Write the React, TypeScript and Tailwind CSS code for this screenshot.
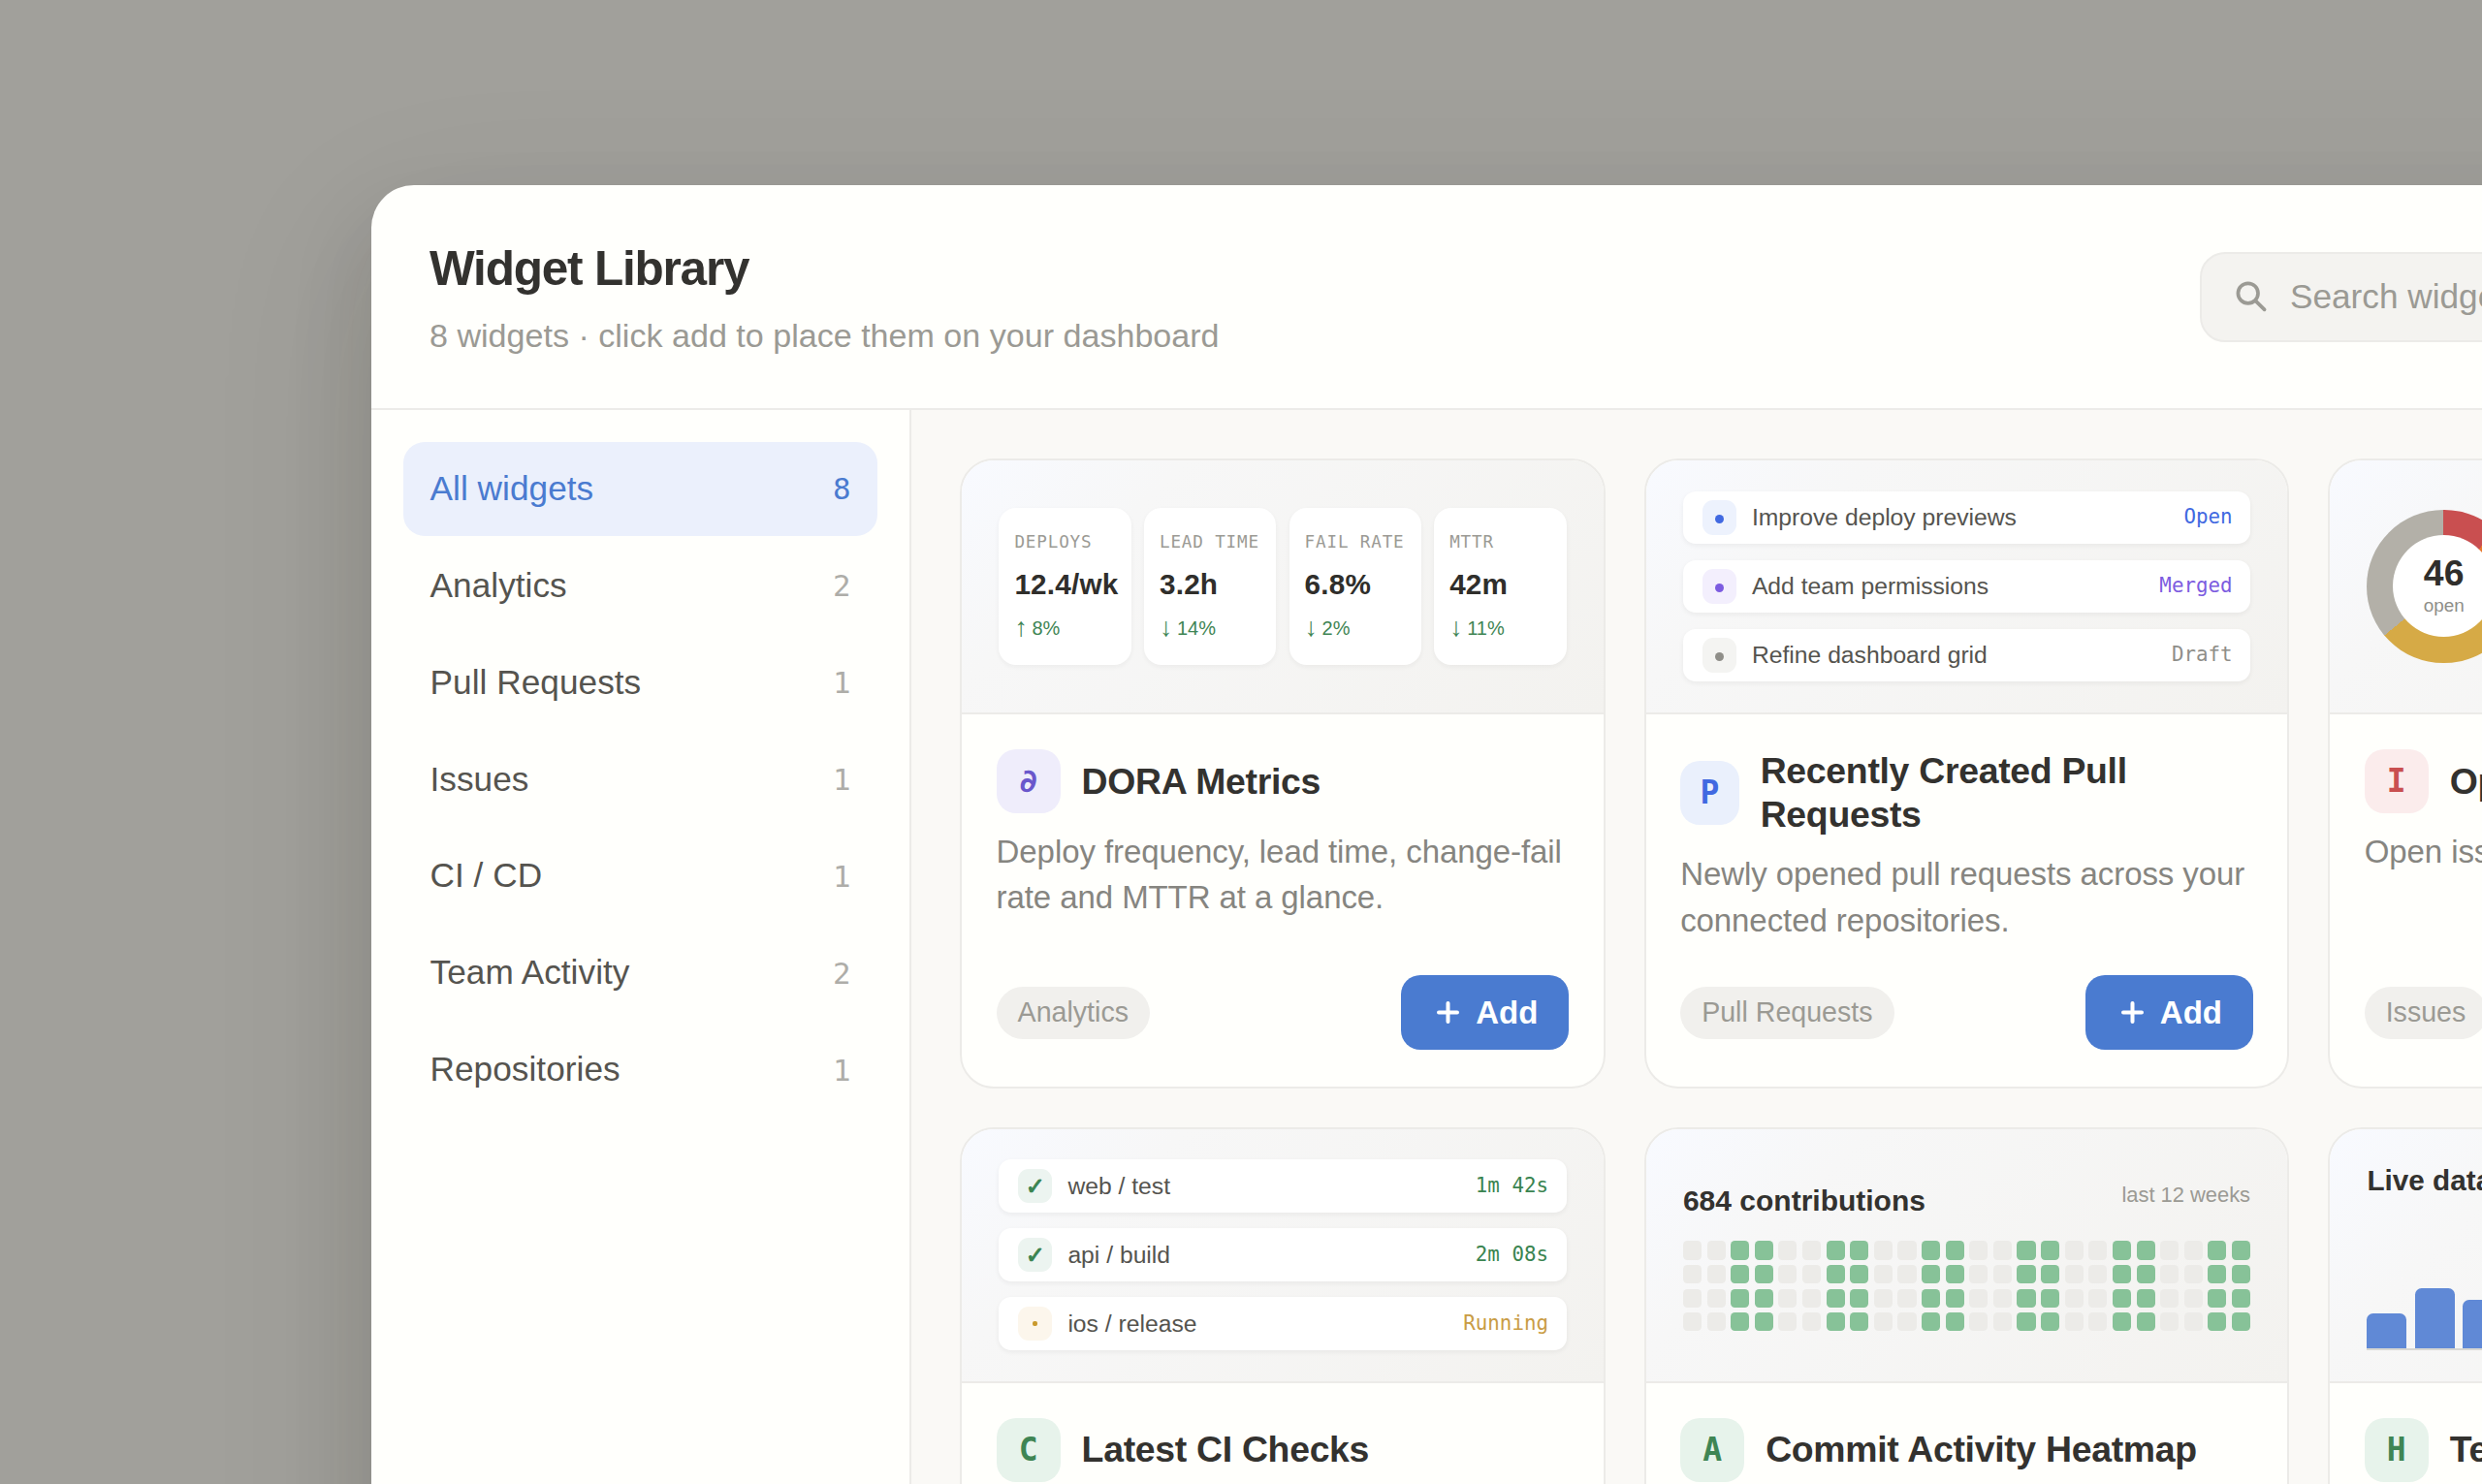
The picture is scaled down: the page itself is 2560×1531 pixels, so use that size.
import type { ReactNode } from 'react';

const categories = [
  { label: 'All widgets', count: 8 },
  { label: 'Analytics', count: 2 },
  { label: 'Pull Requests', count: 1 },
  { label: 'Issues', count: 1 },
  { label: 'CI / CD', count: 1 },
  { label: 'Team Activity', count: 2 },
  { label: 'Repositories', count: 1 },
];

const mono = "font-['DejaVu_Sans_Mono',monospace]";

function SearchIcon() {
  return (
    <svg width="33" height="33" viewBox="0 0 33 33" fill="none" stroke="currentColor" strokeWidth="3.7" strokeLinecap="round">
      <circle cx="12.7" cy="12.6" r="10.3" />
      <path d="M20.7 20.6 29.6 29.4" />
    </svg>
  );
}

function PlusIcon() {
  return (
    <svg width="33" height="33" viewBox="0 0 33 33" fill="none" stroke="currentColor" strokeWidth="4" strokeLinecap="round">
      <path d="M16.5 7v19M7 16.5h19" />
    </svg>
  );
}

function StatsPreview() {
  const stats = [
    { label: 'DEPLOYS', value: '12.4/wk', arrow: '↑', delta: '8%' },
    { label: 'LEAD TIME', value: '3.2h', arrow: '↓', delta: '14%' },
    { label: 'FAIL RATE', value: '6.8%', arrow: '↓', delta: '2%' },
    { label: 'MTTR', value: '42m', arrow: '↓', delta: '11%' },
  ];
  return (
    <div className="grid w-full grid-cols-4 gap-[13.2px]">
      {stats.map((s) => (
        <div key={s.label} className="flex min-w-0 flex-col gap-[8.6px] rounded-[18px] bg-white px-4 py-[22px] shadow-[0_2px_5px_rgba(40,38,30,0.05)]">
          <div className={`${mono} text-[17.6px] leading-[26.4px] tracking-[0.85px] whitespace-nowrap text-[#9b9a94]`}>{s.label}</div>
          <div className="text-[29.7px] leading-[44.5px] font-bold tracking-[0.2px] whitespace-nowrap text-[#2f2e2b]">{s.value}</div>
          <div className="flex items-center gap-[4.5px] text-[20px] leading-[29.7px] text-[#3f8554]">
            <span className="-mt-[5px] -mb-[1px] text-[27px] leading-[28px]">{s.arrow}</span>
            {s.delta}
          </div>
        </div>
      ))}
    </div>
  );
}

type Row = { mark: ReactNode; markClass: string; label: string; status: string; statusClass: string };

function RowsPreview({ rows }: { rows: Row[] }) {
  return (
    <div className="flex w-full flex-col gap-[16.6px]">
      {rows.map((r) => (
        <div key={r.label} className="flex h-[54.4px] items-center gap-[16px] rounded-[13px] bg-white pr-[18.6px] pl-[19.8px] shadow-[0_2px_5px_rgba(40,38,30,0.06)]">
          <span className={`flex size-[35.2px] items-center justify-center rounded-[11px] text-[24px] ${r.markClass}`}>{r.mark}</span>
          <span className="flex-1 text-[24.7px] text-[#55544f]">{r.label}</span>
          <span className={`${mono} text-[20.8px] ${r.statusClass}`}>{r.status}</span>
        </div>
      ))}
    </div>
  );
}

const Dot = () => <span className="mt-[3px] size-[9px] rounded-full bg-current" />;
const Check = () => <span className="font-['DejaVu_Sans',sans-serif] leading-none font-bold [-webkit-text-stroke:1px_currentColor]">✓</span>;

const pullRows: Row[] = [
  { mark: <Dot />, markClass: 'bg-[#edf2fd] text-[#4169e1]', label: 'Improve deploy previews', status: 'Open', statusClass: 'text-[#4169e1]' },
  { mark: <Dot />, markClass: 'bg-[#f3effd] text-[#7c5ce0]', label: 'Add team permissions', status: 'Merged', statusClass: 'text-[#7c5ce0]' },
  { mark: <Dot />, markClass: 'bg-[#f4f4f2] text-[#8f8e89]', label: 'Refine dashboard grid', status: 'Draft', statusClass: 'text-[#8f8e89]' },
];

const ciRows: Row[] = [
  { mark: <Check />, markClass: 'bg-[#ecf4f0] text-[#3a8450]', label: 'web / test', status: '1m 42s', statusClass: 'text-[#3a8450]' },
  { mark: <Check />, markClass: 'bg-[#ecf4f0] text-[#3a8450]', label: 'api / build', status: '2m 08s', statusClass: 'text-[#3a8450]' },
  { mark: <span className="size-[5px] rounded-[2px] bg-current" />, markClass: 'bg-[#fcf6ec] text-[#c99a2e]', label: 'ios / release', status: 'Running', statusClass: 'text-[#c99c44]' },
];

function DonutPreview() {
  return (
    <div className="flex w-full items-center gap-10">
      <div className="flex size-[158.4px] items-center justify-center rounded-full bg-[conic-gradient(#c94f50_0_12%,#e8792f_12%_36%,#d6aa46_36%_64%,#b3b0a8_64%)]">
        <div className="flex size-[105px] flex-col items-center justify-center rounded-full bg-white">
          <div className="text-[37.4px] leading-[40px] font-bold text-[#2f2e2b]">46</div>
          <div className="text-[18.9px] leading-[28px] text-[#8f8e89]">open</div>
        </div>
      </div>
    </div>
  );
}

function HeatmapPreview() {
  return (
    <div className="flex w-full flex-col gap-[19.8px]">
      <div className="flex items-start justify-between">
        <div className="text-[30px] leading-[45px] font-bold text-[#33322f]">684 contributions</div>
        <div className="text-[21.9px] leading-[33px] text-[#9b9a94]">last 12 weeks</div>
      </div>
      <div className="grid grid-cols-24 gap-[5.5px]">
        {Array.from({ length: 96 }, (_, i) => (
          <span key={i} className={`aspect-square rounded-[4.4px] ${i % 4 > 1 ? 'bg-[#87c298]' : 'bg-[#ecebe8]'}`} />
        ))}
      </div>
    </div>
  );
}

function BarsPreview() {
  const heights = [36, 62, 50, 78, 66, 92, 58, 84, 72, 100, 88, 110];
  return (
    <div className="flex h-[197.6px] w-full flex-col justify-between">
      <div className="text-[29.7px] leading-[44.5px] font-bold text-[#33322f]">Live data</div>
      <div className="flex items-end gap-[8.8px] border-b-2 border-[#d8d7d3]">
        {heights.map((h, i) => (
          <span key={i} className="flex-1 rounded-t-[6.6px] bg-[#6089d6]" style={{ height: h }} />
        ))}
      </div>
    </div>
  );
}

type Widget = { glyph: string; glyphClass: string; title: string; text: string; tag: string; preview: ReactNode };

const widgets: Widget[] = [
  { glyph: '∂', glyphClass: 'bg-[#efedfb] text-[#6a57cc]', title: 'DORA Metrics', text: 'Deploy frequency, lead time, change-fail rate and MTTR at a glance.', tag: 'Analytics', preview: <StatsPreview /> },
  { glyph: 'P', glyphClass: 'bg-[#eaf0fc] text-[#4169e1]', title: 'Recently Created Pull Requests', text: 'Newly opened pull requests across your connected repositories.', tag: 'Pull Requests', preview: <RowsPreview rows={pullRows} /> },
  { glyph: 'I', glyphClass: 'bg-[#fbecec] text-[#c94f50]', title: 'Open Issues', text: 'Open issues grouped by priority.', tag: 'Issues', preview: <DonutPreview /> },
  { glyph: 'C', glyphClass: 'bg-[#e7f3eb] text-[#3f8554]', title: 'Latest CI Checks', text: 'Most recent pipeline runs and their status.', tag: 'CI / CD', preview: <RowsPreview rows={ciRows} /> },
  { glyph: 'A', glyphClass: 'bg-[#e7f3eb] text-[#3f8554]', title: 'Commit Activity Heatmap', text: 'Contribution volume over the last weeks.', tag: 'Team Activity', preview: <HeatmapPreview /> },
  { glyph: 'H', glyphClass: 'bg-[#e7f3eb] text-[#3f8554]', title: 'Team Health', text: 'Live team activity at a glance.', tag: 'Team Activity', preview: <BarsPreview /> },
];

function WidgetCard({ widget }: { widget: Widget }) {
  return (
    <article className="flex h-[650px] flex-col overflow-hidden rounded-[35px] border-2 border-[#ecebe8] bg-[#fffffc]">
      <div className="flex h-[262px] shrink-0 items-center border-b-2 border-[#ecebe8] bg-[linear-gradient(135deg,#f8faff_0%,#f7f7f7_25%,#f3f2ef_100%)] px-[38.4px]">
        {widget.preview}
      </div>
      <div className="flex flex-1 flex-col px-[35.6px] pt-[36px] pb-[38px]">
        <div className="flex items-center gap-[22px]">
          <div className={`${mono} flex h-[66px] w-[66px] items-center justify-center rounded-[20px] text-[33px] font-bold ${widget.glyphClass}`}>
            {widget.glyph}
          </div>
          <h3 className="text-[37.4px] leading-[44.9px] font-bold tracking-[-0.3px] text-[#33322f]">{widget.title}</h3>
        </div>
        <p className="mt-[15.6px] text-[33px] leading-[47.8px] tracking-[-0.08px] text-[#868580]">{widget.text}</p>
        <div className="mt-auto flex items-center justify-between">
          <span className="flex h-[54px] items-center rounded-full bg-[#f1f0ed] px-[22px] text-[28.6px] text-[#9b9a94]">{widget.tag}</span>
          <button className="flex h-[77px] w-[173px] items-center justify-center gap-3 rounded-[20px] bg-[#4a7bd0] text-[33px] font-bold text-white">
            <PlusIcon />
            Add
          </button>
        </div>
      </div>
    </article>
  );
}

export default function App() {
  return (
    <div className="flex h-[1531px] w-full overflow-hidden bg-[#a1a09b] pt-[191px] pl-[383px] font-['Liberation_Sans',Arial,sans-serif]">
      <div className="flex h-[1760px] w-[2734px] shrink-0 flex-col overflow-hidden rounded-[44px] bg-[#fffffc] shadow-[0_53px_176px_rgba(30,28,24,0.1),0_44px_88px_rgba(30,28,24,0.12)]">
        <header className="flex h-[232px] shrink-0 items-center justify-between border-b-2 border-[#ecebe8] px-[60px]">
          <div>
            <h1 className="text-[49.5px] leading-[74.2px] font-bold tracking-[-1.2px] text-[#33322f]">Widget Library</h1>
            <p className="mt-[6.6px] text-[34.1px] leading-[51.2px] text-[#9b9a94]">8 widgets · click add to place them on your dashboard</p>
          </div>
          <div className="mt-px flex h-[93px] w-[788px] items-center gap-[23px] rounded-[26px] border-2 border-[#ecebe8] bg-[#f4f3f0] pl-[35px] text-[35.2px] text-[#9b9a94]">
            <SearchIcon />
            <span>Search widgets</span>
          </div>
        </header>
        <div className="flex min-h-0 flex-1">
          <nav className="flex w-[557px] shrink-0 flex-col gap-[3.3px] border-r-2 border-[#ecebe8] p-[33px]">
            {categories.map((c, i) => (
              <div
                key={c.label}
                className={`flex h-[96.6px] shrink-0 items-center justify-between rounded-[22px] pr-[27.5px] pl-[27.5px] ${i === 0 ? 'bg-[#ebf0fc] text-[#4a7bd0]' : 'text-[#55544f]'}`}
              >
                <span className="text-[35.2px] tracking-[0.05px]">{c.label}</span>
                <span className={`${mono} text-[30.8px] ${i === 0 ? '' : 'text-[#aeada8]'}`}>{c.count}</span>
              </div>
            ))}
          </nav>
          <main className="grid flex-1 auto-rows-[650px] grid-cols-3 content-start gap-[39.6px] bg-[#faf9f6] p-[50px]">
            {widgets.map((w) => (
              <WidgetCard key={w.title} widget={w} />
            ))}
          </main>
        </div>
      </div>
    </div>
  );
}
